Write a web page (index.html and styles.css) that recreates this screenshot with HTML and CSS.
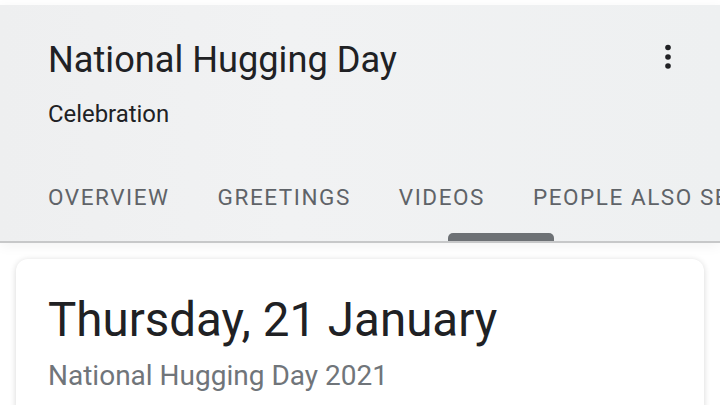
FILE: index.html
```html
<!DOCTYPE html>
<html>
<head>
<meta charset="utf-8">
<link rel="stylesheet" href="styles.css">
</head>
<body>
<div class="topband"></div>
<header class="header">
  <div class="title-row">
    <h1 class="title">National Hugging Day</h1>
    <button class="menu" aria-label="More">
      <svg width="12" height="28" viewBox="0 0 12 28">
        <circle cx="6" cy="4.5" r="2.8" fill="#202124"/>
        <circle cx="6" cy="14" r="2.8" fill="#202124"/>
        <circle cx="6" cy="23" r="2.8" fill="#202124"/>
      </svg>
    </button>
  </div>
  <div class="subtitle">Celebration</div>
  <nav class="tabs">
    <span class="tab">OVERVIEW</span>
    <span class="tab">GREETINGS</span>
    <span class="tab">VIDEOS</span>
    <span class="tab">PEOPLE ALSO SEARCH FOR</span>
    <span class="indicator"></span>
  </nav>
</header>
<main class="content">
  <section class="card">
    <div class="date">Thursday, 21 January</div>
    <div class="date-sub">National Hugging Day 2021</div>
  </section>
</main>
</body>
</html>
```

FILE: styles.css
```css
html, body {
  margin: 0;
  padding: 0;
  background: #ffffff;
  width: 720px;
  height: 405px;
  overflow: hidden;
  font-family: Roboto, "Liberation Sans", sans-serif;
}

.topband {
  height: 5px;
  background: #ffffff;
}

.header {
  background: linear-gradient(90deg, #eeeff0 0%, #f1f2f3 40%, #eef0f1 100%);
  border-bottom: 2px solid #c7c8c9;
  padding-top: 33px;
  box-shadow: 0 3px 12px rgba(0, 0, 0, 0.05);
  position: relative;
  overflow: hidden;
}

.title-row {
  display: flex;
  align-items: flex-start;
  justify-content: space-between;
  padding: 0 40px 0 48px;
}

.title {
  margin: 0;
  font-size: 36.2px;
  line-height: 44px;
  font-weight: 400;
  color: #202124;
}

.menu {
  border: 0;
  background: none;
  padding: 0;
  margin-top: 5px;
  width: 24px;
  display: flex;
  justify-content: center;
}

.subtitle {
  margin-top: 16px;
  padding-left: 48px;
  font-size: 23.9px;
  line-height: 32px;
  color: #202124;
}

.tabs {
  margin-top: 20px;
  display: flex;
  gap: 48px;
  padding-left: 48px;
  white-space: nowrap;
  position: relative;
}

.tab {
  padding: 33px 0 30px;
  font-size: 22.5px;
  line-height: 28px;
  letter-spacing: 1.55px;
  color: #5f6368;
  flex: none;
}

.indicator {
  position: absolute;
  left: 448px;
  bottom: 0;
  width: 106px;
  height: 8px;
  background: #6d7175;
  border-radius: 5px 5px 0 0;
}

.content {
  padding: 16px 16px 0;
}

.card {
  background: #ffffff;
  border-radius: 12px;
  box-shadow: 0 1px 6px rgba(0, 0, 0, 0.16);
  padding: 33px 32px 24px;
}

.date {
  font-size: 47.5px;
  line-height: 56px;
  color: #202124;
}

.date-sub {
  margin-top: 10px;
  font-size: 28px;
  line-height: 36px;
  color: #70757a;
}
```
